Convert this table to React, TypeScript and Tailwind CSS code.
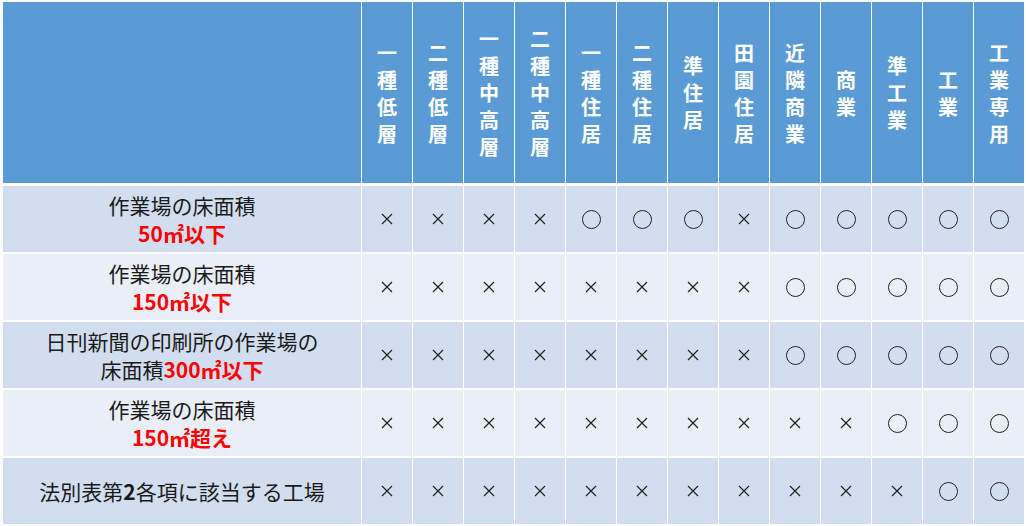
import React from "react";

const zones = [
  "一種低層",
  "二種低層",
  "一種中高層",
  "二種中高層",
  "一種住居",
  "二種住居",
  "準住居",
  "田園住居",
  "近隣商業",
  "商業",
  "準工業",
  "工業",
  "工業専用",
];

type Row = { label: React.ReactNode; marks: string };

const rows: Row[] = [
  {
    label: (
      <>
        作業場の床面積
        <br />
        <span className="font-bold text-[#ff0000]">50㎡以下</span>
      </>
    ),
    marks: "xxxxoooxooooo",
  },
  {
    label: (
      <>
        作業場の床面積
        <br />
        <span className="font-bold text-[#ff0000]">150㎡以下</span>
      </>
    ),
    marks: "xxxxxxxxooooo",
  },
  {
    label: (
      <>
        日刊新聞の印刷所の作業場の
        <br />
        床面積<span className="font-bold text-[#ff0000]">300㎡以下</span>
      </>
    ),
    marks: "xxxxxxxxooooo",
  },
  {
    label: (
      <>
        作業場の床面積
        <br />
        <span className="font-bold text-[#ff0000]">150㎡超え</span>
      </>
    ),
    marks: "xxxxxxxxxxooo",
  },
  {
    label: (
      <>
        法別表第<span className="font-bold">2</span>各項に該当する工場
      </>
    ),
    marks: "xxxxxxxxxxxoo",
  },
];

const Mark = ({ m }: { m: string }) =>
  m === "o" ? (
    <span className="inline-block w-[19px] h-[19px] rounded-full border-[1.5px] border-[#222]"></span>
  ) : (
    <svg width="12" height="12" viewBox="0 0 12 12">
      <path d="M1 1 L11 11 M11 1 L1 11" stroke="#222" strokeWidth="1.2" fill="none" />
    </svg>
  );

const App = () => {
  return (
    <div
      className="w-[1026px] h-[526px] bg-white pl-[3px] pt-[2px]"
      style={{ fontFamily: '"Noto Sans CJK JP", "Liberation Sans", sans-serif' }}
    >
      <div className="grid grid-cols-[358px_repeat(13,50px)] gap-x-[1px]">
        {/* header */}
        <div className="h-[181px] bg-[#5b9bd5]"></div>
        {zones.map((z) => (
          <div
            key={z}
            className="h-[181px] bg-[#5b9bd5] flex flex-col items-center justify-center text-white font-bold text-[20px] leading-[27px]"
          >
            {z.split("").map((c, i) => (
              <span key={i}>{c}</span>
            ))}
          </div>
        ))}
      </div>

      <div className="mt-[3px] flex flex-col gap-[2px]">
        {rows.map((r, ri) => (
          <div
            key={ri}
            className="grid grid-cols-[358px_repeat(13,50px)] gap-x-[1px]"
          >
            <div
              className={`h-[66px] flex items-center justify-center text-center text-[21px] leading-[28px] text-[#1a1a1a] ${
                ri % 2 === 0 ? "bg-[#d2deef]" : "bg-[#eaeff7]"
              }`}
            >
              <div>{r.label}</div>
            </div>
            {r.marks.split("").map((m, i) => (
              <div
                key={i}
                className={`h-[66px] flex items-center justify-center ${
                  ri % 2 === 0 ? "bg-[#d2deef]" : "bg-[#eaeff7]"
                }`}
              >
                <Mark m={m} />
              </div>
            ))}
          </div>
        ))}
      </div>
    </div>
  );
};

export default App;
